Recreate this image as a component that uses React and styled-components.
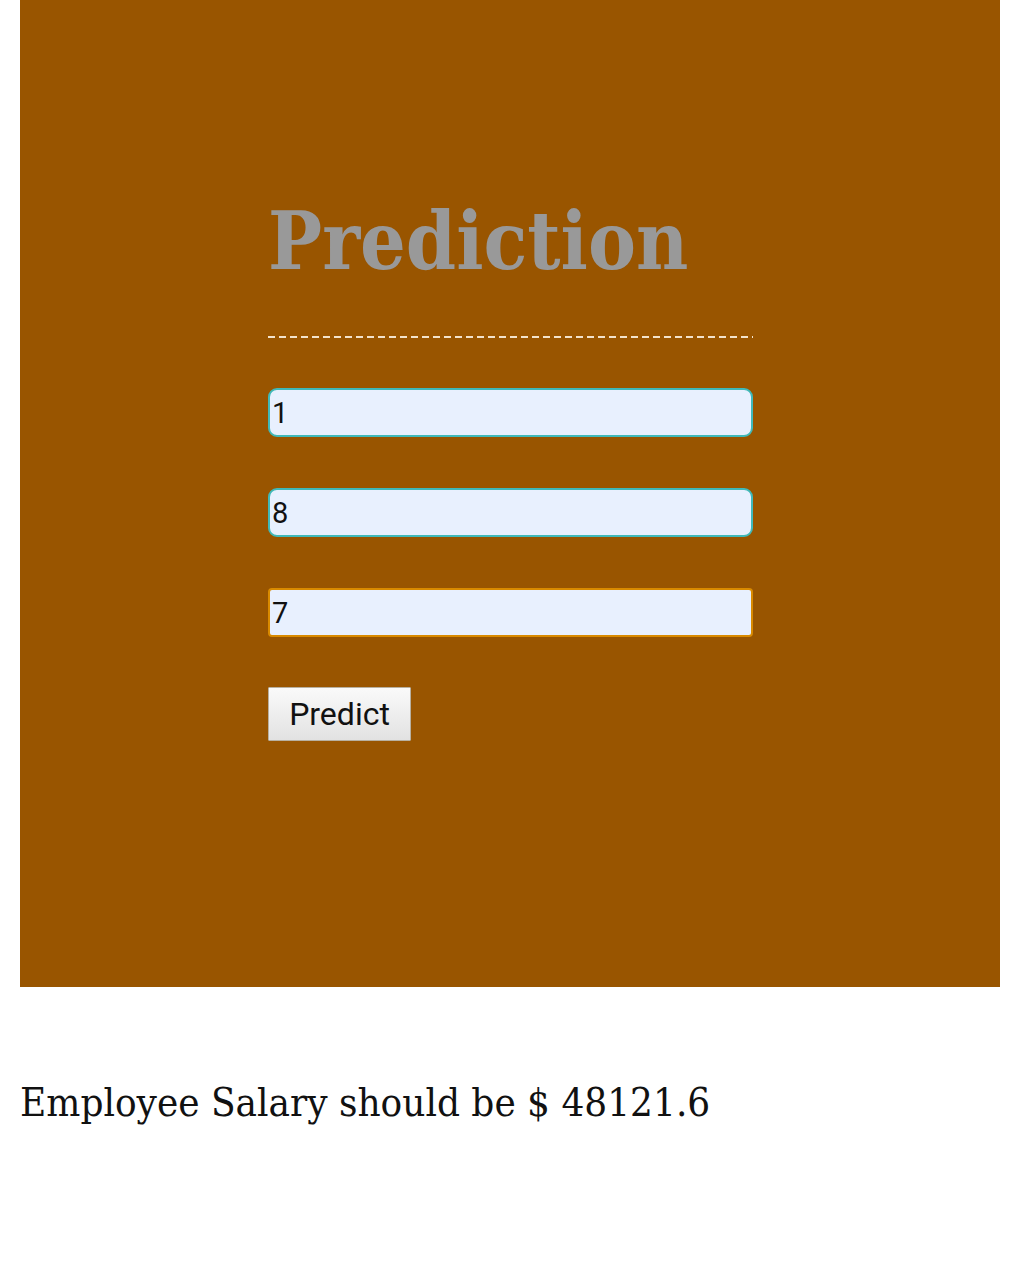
import React from "react";
import styled, { createGlobalStyle } from "styled-components";

const GlobalStyle = createGlobalStyle`
  body {
    margin: 0;
    padding: 0 18px 0 20px;
    background: #ffffff;
    font-family: "DejaVu Serif Condensed", "DejaVu Serif", serif;
  }
`;

const Panel = styled.section`
  background-color: #995500;
  height: 987px;
  box-sizing: border-box;
  padding: 196px 0 0 248px;
`;

const Form = styled.form`
  width: 485px;
  display: flex;
  flex-direction: column;
`;

const Title = styled.h1`
  margin: 0;
  font-family: "DejaVu Serif Condensed", "DejaVu Serif", serif;
  font-weight: bold;
  font-size: 80px;
  line-height: 90px;
  color: #999999;
`;

const Divider = styled.div`
  margin: 50px 0 50px;
  height: 2px;
  width: 100%;
  background: repeating-linear-gradient(
    to right,
    #f3e3cc 0 7px,
    transparent 7px 11px
  );
`;

const Field = styled.input`
  box-sizing: border-box;
  width: 100%;
  height: 49px;
  margin-bottom: ${(p) => (p.$last ? "50px" : "51px")};
  padding: 0 0 0 2px;
  border: 2px solid ${(p) => (p.$focused ? "#d98a00" : "#3fb9b9")};
  border-radius: ${(p) => (p.$focused ? "4px" : "9px")};
  background: #e8f0fe;
  font-family: Roboto, "Liberation Sans", sans-serif;
  font-size: 29px;
  color: #111;
  outline: none;
`;

const Button = styled.button`
  align-self: flex-start;
  width: 143px;
  height: 54px;
  border: 1px solid #b8b0a0;
  border-radius: 1px;
  background: linear-gradient(#fafafa, #e2e2e2);
  font-family: Roboto, "Liberation Sans", sans-serif;
  font-size: 32px;
  color: #111;
  padding: 0;
`;

const Result = styled.p`
  margin: 92px 0 0;
  font-size: 40px;
  color: #111;
`;

export default function App() {
  return (
    <>
      <GlobalStyle />
      <Panel>
        <Form onSubmit={(e) => e.preventDefault()}>
          <Title>Prediction</Title>
          <Divider />
          <Field defaultValue="1" />
          <Field defaultValue="8" />
          <Field defaultValue="7" $focused $last />
          <Button type="submit">Predict</Button>
        </Form>
      </Panel>
      <Result>Employee Salary should be $ 48121.6</Result>
    </>
  );
}
